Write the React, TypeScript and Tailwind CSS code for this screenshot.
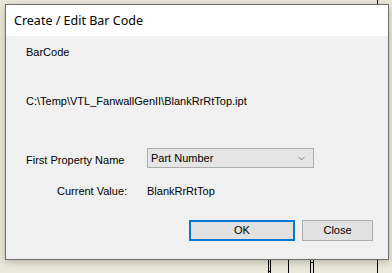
import { ChevronDown } from 'lucide-react';

export default function App() {
  return (
    <div className="relative w-[392px] h-[273px] overflow-hidden bg-[#ebeada] pt-[4px] pl-[5px]">
      {/* drawing lines behind the dialog */}
      <svg className="absolute inset-0" width="392" height="273">
        <g stroke="#000" strokeWidth="1" shapeRendering="crispEdges">
          <line x1="377.5" y1="0" x2="377.5" y2="5" />
          <line x1="268.5" y1="258" x2="268.5" y2="273" />
          <line x1="270.5" y1="258" x2="270.5" y2="273" />
          <line x1="268" y1="271.5" x2="271" y2="271.5" />
          <line x1="288.5" y1="258" x2="288.5" y2="273" />
          <line x1="310.5" y1="258" x2="310.5" y2="273" />
          <line x1="313.5" y1="258" x2="313.5" y2="273" />
          <line x1="310" y1="262.5" x2="314" y2="262.5" />
          <line x1="377.5" y1="258" x2="377.5" y2="273" />
        </g>
      </svg>

      <div className="relative flex flex-col w-[384px] h-[256px] border border-[#6e6e6e] bg-[#f0f0f0] shadow-[0_2px_8px_rgba(0,0,0,0.25)] font-['Liberation_Sans',Arial,sans-serif] text-[11px] leading-[13px] text-black">
        <div className="h-[31px] bg-white flex items-center pl-[8px] font-['Noto_Sans','Open_Sans',sans-serif] text-[12.5px] text-[#000]">
          Create / Edit Bar Code
        </div>

        <div className="flex flex-col pl-[20px]">
          <div className="mt-[10px]">BarCode</div>
          <div className="mt-[36px]">C:\Temp\VTL_FanwallGenII\BlankRrRtTop.ipt</div>

          <div className="mt-[40px] flex items-start">
            <div className="w-[121px] mt-[6px]">First Property Name</div>
            <div className="w-[167px] h-[20px] border border-[#acacac] bg-[#e5e5e5] flex items-center justify-between pl-[3px] pr-[6px]">
              <span>Part Number</span>
              <ChevronDown className="w-[11px] h-[11px] text-[#404040]" strokeWidth={1.3} />
            </div>
          </div>

          <div className="mt-[17px] flex">
            <div className="w-[121px] pl-[31px]">Current Value:</div>
            <div>BlankRrRtTop</div>
          </div>

          <div className="mt-[22px] flex gap-[7px] pl-[163px]">
            <button className="w-[106px] h-[21px] border-2 border-[#0078d7] bg-[#e1e1e1] flex items-center justify-center">
              OK
            </button>
            <button className="w-[71px] h-[21px] border border-[#adadad] bg-[#e1e1e1] flex items-center justify-center">
              Close
            </button>
          </div>
        </div>
      </div>
    </div>
  );
}
